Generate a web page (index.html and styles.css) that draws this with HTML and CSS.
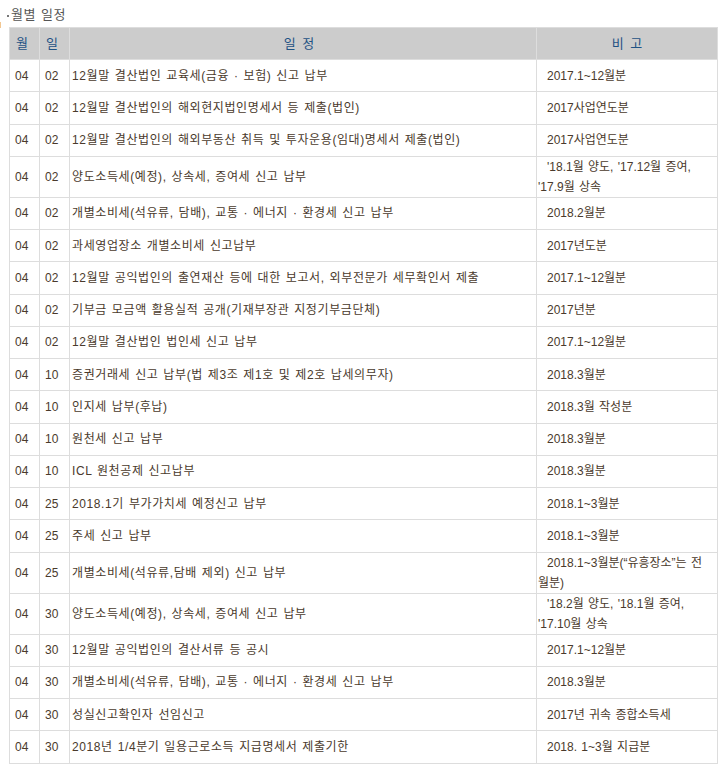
FILE: index.html
```
<!DOCTYPE html>
<html lang="ko">
<head>
<meta charset="utf-8">
<title>월별 일정</title>
<link rel="stylesheet" href="styles.css">
</head>
<body>
<div class="page">
  <h3 class="section-title">월별 일정</h3>
  <table class="schedule">
    <colgroup>
      <col class="c-month">
      <col class="c-day">
      <col class="c-task">
      <col class="c-note">
    </colgroup>
    <thead>
      <tr>
        <th class="h-month">월</th>
        <th class="h-day">일</th>
        <th class="h-task">일 정</th>
        <th class="h-note">비 고</th>
      </tr>
    </thead>
    <tbody>
      <tr><td class="m">04</td><td class="d">02</td><td class="t">12월말 결산법인 교육세(금융 · 보험) 신고 납부</td><td class="n">2017.1~12월분</td></tr>
      <tr><td class="m">04</td><td class="d">02</td><td class="t">12월말 결산법인의 해외현지법인명세서 등 제출(법인)</td><td class="n">2017사업연도분</td></tr>
      <tr><td class="m">04</td><td class="d">02</td><td class="t">12월말 결산법인의 해외부동산 취득 및 투자운용(임대)명세서 제출(법인)</td><td class="n">2017사업연도분</td></tr>
      <tr><td class="m">04</td><td class="d">02</td><td class="t">양도소득세(예정), 상속세, 증여세 신고 납부</td><td class="n">'18.1월 양도, '17.12월 증여,<br>'17.9월 상속</td></tr>
      <tr><td class="m">04</td><td class="d">02</td><td class="t">개별소비세(석유류, 담배), 교통 · 에너지 · 환경세 신고 납부</td><td class="n">2018.2월분</td></tr>
      <tr><td class="m">04</td><td class="d">02</td><td class="t">과세영업장소 개별소비세 신고납부</td><td class="n">2017년도분</td></tr>
      <tr><td class="m">04</td><td class="d">02</td><td class="t">12월말 공익법인의 출연재산 등에 대한 보고서, 외부전문가 세무확인서 제출</td><td class="n">2017.1~12월분</td></tr>
      <tr><td class="m">04</td><td class="d">02</td><td class="t">기부금 모금액 활용실적 공개(기재부장관 지정기부금단체)</td><td class="n">2017년분</td></tr>
      <tr><td class="m">04</td><td class="d">02</td><td class="t">12월말 결산법인 법인세 신고 납부</td><td class="n">2017.1~12월분</td></tr>
      <tr><td class="m">04</td><td class="d">10</td><td class="t">증권거래세 신고 납부(법 제3조 제1호 및 제2호 납세의무자)</td><td class="n">2018.3월분</td></tr>
      <tr><td class="m">04</td><td class="d">10</td><td class="t">인지세 납부(후납)</td><td class="n">2018.3월 작성분</td></tr>
      <tr><td class="m">04</td><td class="d">10</td><td class="t">원천세 신고 납부</td><td class="n">2018.3월분</td></tr>
      <tr><td class="m">04</td><td class="d">10</td><td class="t">ICL 원천공제 신고납부</td><td class="n">2018.3월분</td></tr>
      <tr><td class="m">04</td><td class="d">25</td><td class="t">2018.1기 부가가치세 예정신고 납부</td><td class="n">2018.1~3월분</td></tr>
      <tr><td class="m">04</td><td class="d">25</td><td class="t">주세 신고 납부</td><td class="n">2018.1~3월분</td></tr>
      <tr><td class="m">04</td><td class="d">25</td><td class="t">개별소비세(석유류,담배 제외) 신고 납부</td><td class="n">2018.1~3월분(“유흥장소”는 전<br>월분)</td></tr>
      <tr><td class="m">04</td><td class="d">30</td><td class="t">양도소득세(예정), 상속세, 증여세 신고 납부</td><td class="n">'18.2월 양도, '18.1월 증여,<br>'17.10월 상속</td></tr>
      <tr><td class="m">04</td><td class="d">30</td><td class="t">12월말 공익법인의 결산서류 등 공시</td><td class="n">2017.1~12월분</td></tr>
      <tr><td class="m">04</td><td class="d">30</td><td class="t">개별소비세(석유류, 담배), 교통 · 에너지 · 환경세 신고 납부</td><td class="n">2018.3월분</td></tr>
      <tr><td class="m">04</td><td class="d">30</td><td class="t">성실신고확인자 선임신고</td><td class="n">2017년 귀속 종합소득세</td></tr>
      <tr><td class="m">04</td><td class="d">30</td><td class="t">2018년 1/4분기 일용근로소득 지급명세서 제출기한</td><td class="n">2018. 1~3월 지급분</td></tr>
    </tbody>
  </table>
</div>
</body>
</html>
```
FILE: styles.css
```
html, body {
  margin: 0;
  padding: 0;
  background: #ffffff;
}

body {
  font-family: "Liberation Sans", "Noto Sans CJK KR", sans-serif;
  font-size: 12px;
  color: #4a3a2c;
}

.page {
  position: relative;
  padding: 0 0 0 9px;
}

.page::before {
  content: "";
  position: absolute;
  left: 0;
  top: 22px;
  width: 1px;
  height: 6px;
  background: #f2c792;
}

.section-title {
  margin: 0 0 2px -2px;
  padding-top: 5px;
  font-size: 13px;
  font-weight: normal;
  line-height: 20px;
  color: #555555;
  letter-spacing: 0.5px;
  word-spacing: 1px;
}

.section-title::before {
  content: "";
  display: inline-block;
  width: 2px;
  height: 2px;
  margin-right: 2px;
  vertical-align: middle;
  background: #777777;
}

.schedule {
  width: 708px;
  table-layout: fixed;
  border-collapse: collapse;
}

.c-month { width: 30px; }
.c-day { width: 30px; }
.c-task { width: 467px; }
.c-note { width: 181px; }

.schedule th {
  height: 32px;
  box-sizing: border-box;
  padding: 0 5px;
  background: #cccccc;
  border: 1px solid #dddddd;
  font-size: 13px;
  font-weight: normal;
  line-height: 20px;
  color: #1f5284;
  text-align: center;
  word-spacing: 3px;
}

.schedule th.h-month,
.schedule th.h-day {
  text-align: left;
  padding-left: 6px;
}

.schedule th.h-task {
  padding-right: 13px;
}

.schedule td {
  height: 32.25px;
  box-sizing: border-box;
  padding: 0 2px;
  border: 1px solid #dddddd;
  line-height: 20px;
  vertical-align: middle;
  text-align: left;
  word-spacing: 1px;
}

.schedule td.m,
.schedule td.d {
  padding-left: 5px;
}

.schedule td.t {
  letter-spacing: 0.6px;
}

.schedule td.n {
  padding-left: 1px;
  text-indent: 9px;
}
```
